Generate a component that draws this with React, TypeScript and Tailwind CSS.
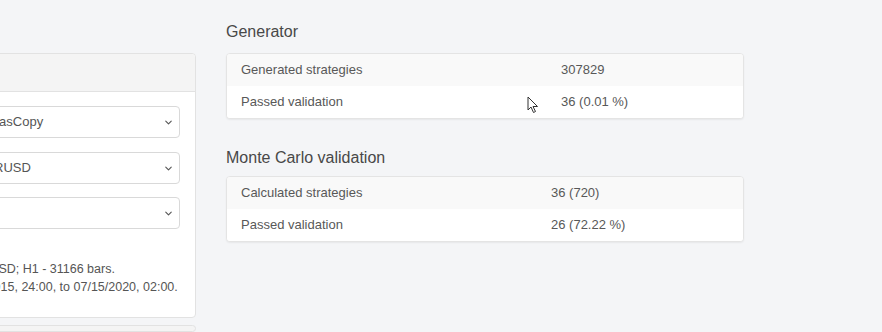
import { ChevronDown } from "lucide-react";

const font = { fontFamily: '"Liberation Sans", Arial, sans-serif' };

function Select({ value }: { value: string }) {
  return (
    <div className="flex h-[32px] items-center justify-between rounded-[4px] border border-[#d9d9d9] bg-white pl-[12px] pr-[5px] text-[13px] text-[#555]">
      <span className="whitespace-nowrap">{value}</span>
      <ChevronDown size={11} strokeWidth={2.4} className="text-[#555]" />
    </div>
  );
}

function StatCard({
  rows,
  labelWidth,
}: {
  rows: [string, string][];
  labelWidth: string;
}) {
  return (
    <div className="overflow-hidden rounded-[4px] border border-[#e4e4e4] bg-white shadow-[0_1px_2px_rgba(0,0,0,0.06)]">
      {rows.map(([label, value], i) => (
        <div
          key={label}
          className={`flex h-[32px] items-center pl-[14px] text-[13px] text-[#585858] ${
            i % 2 === 0 ? "bg-[#f9f9f9]" : "bg-white"
          }`}
        >
          <span className={labelWidth}>{label}</span>
          <span>{value}</span>
        </div>
      ))}
    </div>
  );
}

export default function App() {
  return (
    <main
      style={font}
      className="relative flex h-[332px] w-[882px] gap-[30px] overflow-hidden bg-[#f4f5f7]"
    >
      <div className="ml-[-53px] flex w-[249px] shrink-0 flex-col gap-[7px] pt-[53px]">
        <div className="rounded-[4px] border border-[#e2e2e2] bg-white">
          <div className="h-[38px] rounded-t-[4px] border-b border-[#e2e2e2] bg-[#f4f4f4]" />
          <div className="flex flex-col px-[15px] pt-[14px] pb-[21px]">
            <Select value="DukasCopy" />
            <div className="mt-[14px]">
              <Select value="EURUSD" />
            </div>
            <div className="mt-[13px]">
              <Select value="H1" />
            </div>
            <div className="mt-[31px] text-[12.5px] leading-[18px] whitespace-nowrap text-[#555]">
              <p>EURUSD; H1 - 31166 bars.</p>
              <p>Jan 2015, 24:00, to 07/15/2020, 02:00.</p>
            </div>
          </div>
        </div>
        <div className="h-[40px] rounded-[4px] border border-[#e2e2e2] bg-[#f4f4f4]" />
      </div>

      <div className="flex w-[518px] flex-col pt-[21px]">
        <h2 className="text-[16px] leading-[22px] text-[#484848]">Generator</h2>
        <div className="mt-[10px]">
          <StatCard
            labelWidth="w-[320px]"
            rows={[
              ["Generated strategies", "307829"],
              ["Passed validation", "36 (0.01 %)"],
            ]}
          />
        </div>
        <h2 className="mt-[28px] text-[16px] leading-[22px] text-[#484848]">
          Monte Carlo validation
        </h2>
        <div className="mt-[7px]">
          <StatCard
            labelWidth="w-[310px]"
            rows={[
              ["Calculated strategies", "36 (720)"],
              ["Passed validation", "26 (72.22 %)"],
            ]}
          />
        </div>
      </div>

      <svg
        className="absolute left-[527px] top-[96px]"
        width="12"
        height="18"
        viewBox="0 0 12 18"
      >
        <path
          d="M1 1 L1 14 L4 11 L6.5 16.5 L8.5 15.5 L6 10.5 L10.5 10.5 Z"
          fill="white"
          stroke="#333"
          strokeWidth="1"
          strokeLinejoin="round"
        />
      </svg>
    </main>
  );
}
